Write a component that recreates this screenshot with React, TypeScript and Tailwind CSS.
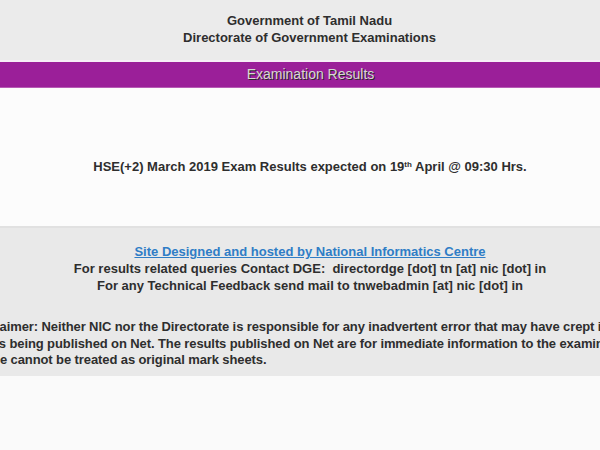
export default function App() {
  const font = { fontFamily: '"Liberation Sans", Arial, sans-serif' };
  return (
    <div className="w-[600px] h-[450px] overflow-hidden bg-[#fafafa] text-[#2e2e2e]" style={font}>
      {/* cabecera */}
      <div className="h-[60px] bg-[#ebebeb] flex flex-col items-center justify-center font-bold text-[13px] leading-[17px] pb-[3px] pl-[19px]">
        <div>Government of Tamil Nadu</div>
        <div>Directorate of Government Examinations</div>
      </div>
      <div className="h-[2px] bg-[#f6eef6]" />
      <div className="h-[26px] bg-[#9b1f99] border-b border-[#b65bb4] flex items-center justify-center pl-[21px]">
        <span className="text-[14px] text-[#d6d6d6] [text-shadow:1px_1px_0_#2a2a2a]">Examination Results</span>
      </div>

      {/* aviso */}
      <div className="h-[138px] bg-[#fcfcfc] flex items-center justify-center font-bold text-[13px] pt-[20px] pl-[20px]">
        <span>
          HSE(+2) March 2019 Exam Results expected on 19<sup className="text-[8px]">th</sup> April @ 09:30 Hrs.
        </span>
      </div>

      {/* pie */}
      <div className="border-t-2 border-[#e1e1e1] bg-[#e9e9e9] h-[150px] pt-[15px] font-bold text-[13px]">
        <div className="flex flex-col items-center leading-[17px] pl-[20px]">
          <a className="text-[#2f7dc6] underline">Site Designed and hosted by National Informatics Centre</a>
          <div>For results related queries Contact DGE:&nbsp; directordge [dot] tn [at] nic [dot] in</div>
          <div>For any Technical Feedback send mail to tnwebadmin [at] nic [dot] in</div>
        </div>
        <div className="mt-[25px] leading-[16.5px] whitespace-nowrap tracking-[-0.1px]">
          <div className="ml-[-31px]">
            Disclaimer: Neither NIC nor the Directorate is responsible for any inadvertent error that may have crept in the results
          </div>
          <div className="ml-[-36px]">
            results being published on Net. The results published on Net are for immediate information to the examinees.
          </div>
          <div className="ml-[-30px]">These cannot be treated as original mark sheets.</div>
        </div>
      </div>
    </div>
  );
}
